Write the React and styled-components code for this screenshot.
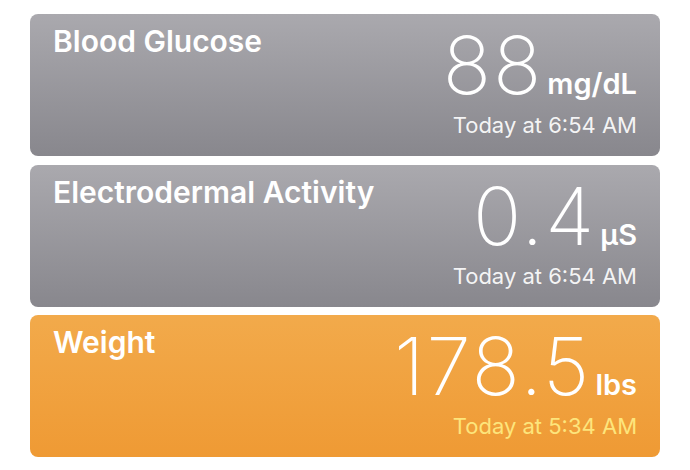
import React from 'react';
import styled, { createGlobalStyle } from 'styled-components';

const GlobalStyle = createGlobalStyle`
  body {
    margin: 0;
    background: #ffffff;
    font-family: Inter, "Noto Sans", sans-serif;
  }
`;

const List = styled.div`
  display: flex;
  flex-direction: column;
  gap: 8.5px;
  width: 630px;
  padding: 14px 0 0 30px;
`;

const Card = styled.div`
  height: 142px;
  box-sizing: border-box;
  display: flex;
  justify-content: space-between;
  padding: 10px 23px 0 23px;
  border-radius: 8px;
  color: #ffffff;
  background: ${({ $tone }) =>
    $tone === 'orange'
      ? 'linear-gradient(180deg, #f2aa4b 0%, #ef9a34 100%)'
      : 'linear-gradient(180deg, #aaa9ae 0%, #88878d 100%)'};
`;

const Title = styled.div`
  font-size: 30px;
  font-weight: 600;
  line-height: 34px;
`;

const Reading = styled.div`
  display: flex;
  flex-direction: column;
  align-items: flex-end;
`;

const ValueRow = styled.div`
  display: flex;
  align-items: baseline;
  height: 80px;
  margin-top: 1px;
`;

const Number = styled.span`
  font-size: 80px;
  font-weight: 200;
  line-height: 80px;
  letter-spacing: 2px;
`;

const Unit = styled.span`
  font-size: 29px;
  font-weight: 600;
  margin-left: 4px;
`;

const Time = styled.div`
  font-size: 22px;
  font-weight: 400;
  line-height: 28px;
  margin-top: 6px;
  color: ${({ $tone }) => ($tone === 'orange' ? '#fde57c' : 'rgba(255,255,255,0.92)')};
`;

const readings = [
  { title: 'Blood Glucose', value: '88', unit: 'mg/dL', time: 'Today at 6:54 AM' },
  { title: 'Electrodermal Activity', value: '0.4', unit: 'µS', time: 'Today at 6:54 AM' },
  { title: 'Weight', value: '178.5', unit: 'lbs', time: 'Today at 5:34 AM', tone: 'orange' },
];

export default function App() {
  return (
    <>
      <GlobalStyle />
      <List>
        {readings.map((r) => (
          <Card key={r.title} $tone={r.tone}>
            <Title>{r.title}</Title>
            <Reading>
              <ValueRow>
                <Number>{r.value}</Number>
                <Unit>{r.unit}</Unit>
              </ValueRow>
              <Time $tone={r.tone}>{r.time}</Time>
            </Reading>
          </Card>
        ))}
      </List>
    </>
  );
}
